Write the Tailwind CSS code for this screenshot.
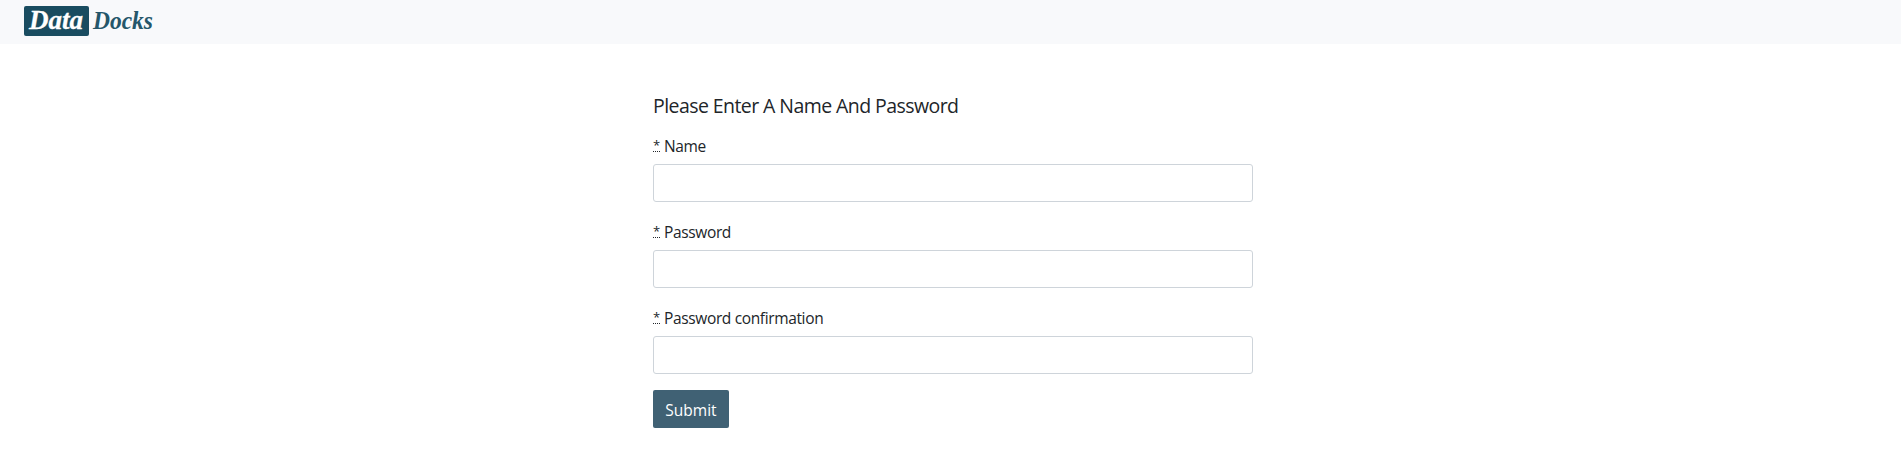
<!DOCTYPE html>
<html lang="en">
<head>
<meta charset="utf-8">
<title>DataDocks</title>
<script src="https://cdn.jsdelivr.net/npm/@tailwindcss/browser@4"></script>
</head>
<body class="bg-white font-['Open_Sans',sans-serif] text-[15.5px] leading-[26px] text-[#212529]">
<nav class="flex h-11 items-start bg-[#f8f9fb] pt-1.5 pl-6">
  <svg class="h-[30px] w-[140px] overflow-visible" viewBox="0 0 140 30" role="img" aria-label="Data Docks">
    <rect width="65" height="30" rx="2" fill="#194c60"/>
    <g font-family="Liberation Serif, serif" font-weight="bold" font-style="italic" stroke-width=".3">
      <text x="5" y="22.5" font-size="27" textLength="54" lengthAdjust="spacingAndGlyphs" fill="#fff" stroke="#fff">Data</text>
      <text x="69" y="22.5" font-size="26" textLength="60" lengthAdjust="spacingAndGlyphs" fill="#24566a">Docks</text>
    </g>
  </svg>
</nav>
<main class="ml-[653px] w-[600px] pt-[50px]">
  <h1 class="mb-[7px] text-[19.5px] leading-6 tracking-[-0.57px]">Please Enter A Name And Password</h1>
  <form>
    <div class="mb-4 pt-2">
      <label class="mb-[7px] block h-6 tracking-[-0.36px]" for="name"><abbr class="inline-block h-[19px] w-[7px] border-b border-dotted border-[#212529] align-top text-[13px] leading-6 no-underline">*</abbr><span class="ml-1">Name</span></label>
      <input id="name" type="text" class="block h-[38px] w-full rounded-[3px] border border-[#ced4da] px-3">
    </div>
    <div class="mb-4 pt-px">
      <label class="mb-[7px] block h-6 tracking-[-0.36px]" for="pw"><abbr class="inline-block h-[19px] w-[7px] border-b border-dotted border-[#212529] align-top text-[13px] leading-6 no-underline">*</abbr><span class="ml-1">Password</span></label>
      <input id="pw" type="password" class="block h-[38px] w-full rounded-[3px] border border-[#ced4da] px-3">
    </div>
    <div class="mb-4 pt-px">
      <label class="mb-[7px] block h-6 tracking-[-0.36px]" for="pwc"><abbr class="inline-block h-[19px] w-[7px] border-b border-dotted border-[#212529] align-top text-[13px] leading-6 no-underline">*</abbr><span class="ml-1">Password confirmation</span></label>
      <input id="pwc" type="password" class="block h-[38px] w-full rounded-[3px] border border-[#ced4da] px-3">
    </div>
    <button type="button" class="flex h-[38px] w-[76px] items-center justify-center rounded-[2px] bg-[#406174] pt-px text-white">Submit</button>
  </form>
</main>
</body>
</html>
